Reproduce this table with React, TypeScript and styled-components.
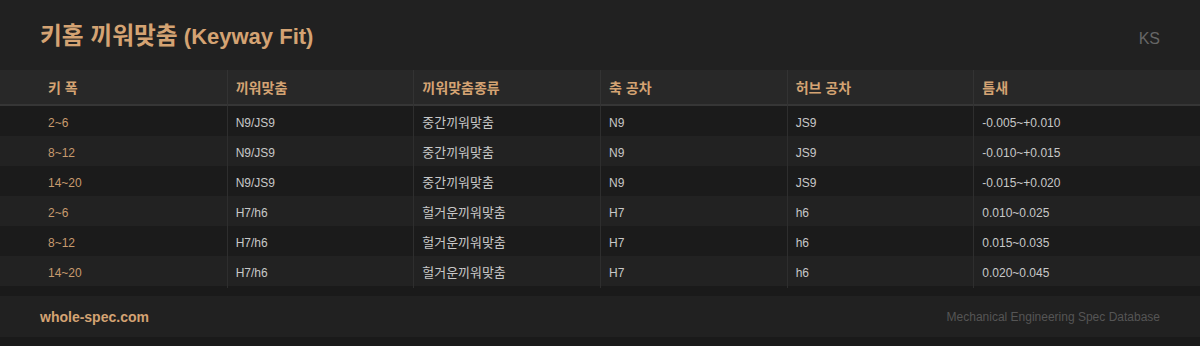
import { FC, Fragment } from "react";
import styled, { createGlobalStyle } from "styled-components";

const GlobalStyle = createGlobalStyle`
  html, body {
    margin: 0;
    padding: 0;
    background: #1a1a1a;
    font-family: "Liberation Sans", "Noto Sans CJK KR", sans-serif;
  }
`;

type Row = [string, string, string, string, string, string];

const HEADERS: Row = ["키 폭", "끼워맞춤", "끼워맞춤종류", "축 공차", "허브 공차", "틈새"];

const ROWS: Row[] = [
  ["2~6", "N9/JS9", "중간끼워맞춤", "N9", "JS9", "-0.005~+0.010"],
  ["8~12", "N9/JS9", "중간끼워맞춤", "N9", "JS9", "-0.010~+0.015"],
  ["14~20", "N9/JS9", "중간끼워맞춤", "N9", "JS9", "-0.015~+0.020"],
  ["2~6", "H7/h6", "헐거운끼워맞춤", "H7", "h6", "0.010~0.025"],
  ["8~12", "H7/h6", "헐거운끼워맞춤", "H7", "h6", "0.015~0.035"],
  ["14~20", "H7/h6", "헐거운끼워맞춤", "H7", "h6", "0.020~0.045"],
];

// hangul glyphs sit a bit larger than the latin ones
const Mixed: FC<{ text: string }> = ({ text }) => (
  <>
    {text.split(/([가-힣]+(?: [가-힣]+)*)/).map((part, i) =>
      /[가-힣]/.test(part) ? (
        <Hangul key={i}>{part}</Hangul>
      ) : (
        <Fragment key={i}>{part}</Fragment>
      )
    )}
  </>
);

export default function App() {
  return (
    <>
      <GlobalStyle />
      <Page>
        <TitleBar>
          <Title>
            <Mixed text="키홈 끼워맞춤 (Keyway Fit)" />
          </Title>
          <Badge>KS</Badge>
        </TitleBar>
        <SpecTable />
        <Footer>
          <Brand>whole-spec.com</Brand>
          <Tagline>Mechanical Engineering Spec Database</Tagline>
        </Footer>
      </Page>
    </>
  );
}

const SpecTable: FC = () => (
  <Table>
    <HeadRow>
      {HEADERS.map((h, i) => (
        <HeadCell key={h} $first={i === 0}>
          <Mixed text={h} />
        </HeadCell>
      ))}
    </HeadRow>
    {ROWS.map((row, r) => (
      <BodyRow key={r} $odd={r % 2 === 1}>
        {row.map((c, i) => (
          <Cell key={i} $first={i === 0} $accent={i === 0}>
            <Mixed text={c} />
          </Cell>
        ))}
      </BodyRow>
    ))}
  </Table>
);

const Hangul = styled.span`
  font-size: 1.08em;
  line-height: 0;
`;

const Page = styled.div`
  width: 1200px;
  height: 346px;
  display: flex;
  flex-direction: column;
  background: #1a1a1a;
`;

const TitleBar = styled.header`
  height: 70px;
  padding: 0 40px;
  display: flex;
  align-items: center;
  justify-content: space-between;
  background: #212121;
  box-sizing: border-box;
`;

const Title = styled.h1`
  margin: 0;
  padding-top: 3px;
  font-size: 22px;
  line-height: 30px;
  font-weight: 700;
  color: #d4a373;
`;

const Badge = styled.span`
  font-size: 16px;
  line-height: 20px;
  color: #666;
  padding-top: 7px;
`;

const Table = styled.div`
  display: flex;
  flex-direction: column;
`;

const RowBase = styled.div`
  display: grid;
  grid-template-columns: repeat(6, 1fr);
  padding: 0 40px;
  box-sizing: border-box;
`;

const HeadRow = styled(RowBase)`
  height: 36px;
  background: #282828;
  border-bottom: 2px solid #363636;
`;

const BodyRow = styled(RowBase)<{ $odd: boolean }>`
  height: 30px;
  background: ${(p) => (p.$odd ? "#222222" : "#1b1b1b")};
`;

const HeadCell = styled.div<{ $first: boolean }>`
  padding: 2px 8px 0;
  font-size: 13px;
  line-height: 34px;
  font-weight: 700;
  color: #d4a373;
  white-space: nowrap;
  border-left: ${(p) => (p.$first ? "none" : "1px solid #333")};
`;

const Cell = styled.div<{ $first: boolean; $accent: boolean }>`
  padding: 2px 8px 0;
  font-size: 12px;
  line-height: 30px;
  white-space: nowrap;
  color: ${(p) => (p.$accent ? "#c79a6e" : "#c8c8c8")};
  border-left: ${(p) => (p.$first ? "none" : "1px solid #2e2e2e")};
`;

const Footer = styled.footer`
  margin-top: 10px;
  height: 40px;
  padding: 1px 40px 0;
  display: flex;
  align-items: center;
  justify-content: space-between;
  background: #212121;
`;

const Brand = styled.span`
  font-size: 14px;
  font-weight: 700;
  color: #d4a373;
`;

const Tagline = styled.span`
  font-size: 12px;
  color: #555;
`;
